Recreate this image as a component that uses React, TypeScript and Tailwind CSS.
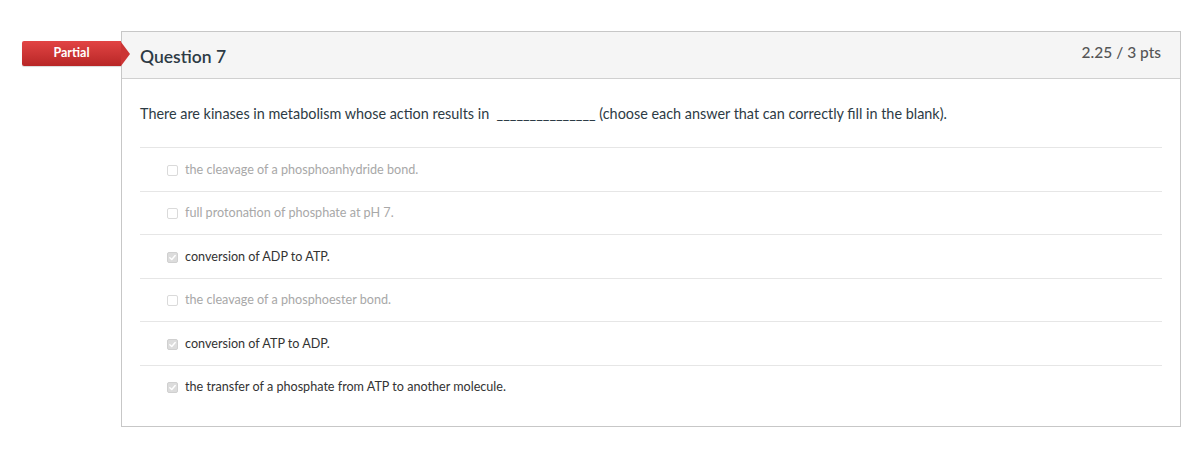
import React from "react";

const answers = [
  { text: "the cleavage of a phosphoanhydride bond.", checked: false },
  { text: "full protonation of phosphate at pH 7.", checked: false },
  { text: "conversion of ADP to ATP.", checked: true },
  { text: "the cleavage of a phosphoester bond.", checked: false },
  { text: "conversion of ATP to ADP.", checked: true },
  { text: "the transfer of a phosphate from ATP to another molecule.", checked: true },
];

function Box({ checked }: { checked: boolean }) {
  return (
    <span
      className={`flex h-[11px] w-[11px] shrink-0 items-center justify-center rounded-[2px] border ${
        checked ? "border-[#d0d0d0] bg-[#dcdcdc]" : "border-[#dadada] bg-white"
      }`}
    >
      {checked && (
        <svg width="9" height="9" viewBox="0 0 10 10">
          <path d="M2 5.2 L4.2 7.3 L8 2.8" fill="none" stroke="#ffffff" strokeWidth="1.6" strokeLinecap="round" strokeLinejoin="round" />
        </svg>
      )}
    </span>
  );
}

export default function App() {
  return (
    <div className="relative bg-white pt-[31px] pb-[27px]" style={{ fontFamily: "Lato, 'Open Sans', sans-serif" }}>
      <div className="ml-[121px] w-[1060px] border border-[#c7c7c7]">
        <div className="flex h-[47px] items-start justify-between border-b border-[#d0d0d0] bg-[#f5f5f5] pl-[18px] pr-[19px]">
          <div className="pt-[12px] text-[17.5px] font-semibold text-[#2d3b45]">Question 7</div>
          <div className="pt-[9px] text-[15.5px] font-medium text-[#555555]">2.25 / 3 pts</div>
        </div>
        <div className="px-[18px] pb-[18px]">
          <div className="pt-[25px] pb-[23px] text-[14.4px] leading-[20px] text-[#2d3b45]">
            There are kinases in metabolism whose action results in&nbsp; _______________ (choose each answer that can correctly fill in the blank).
          </div>
          {answers.map((a, i) => (
            <div key={i} className="flex h-[43.5px] items-center border-t border-[#e6e6e6] pl-[27px] pt-[2px]">
              <Box checked={a.checked} />
              <span className={`ml-[7px] text-[12.6px] ${a.checked ? "text-[#333333]" : "text-[#a8a8a8]"}`}>{a.text}</span>
            </div>
          ))}
        </div>
      </div>
      <div className="absolute left-[22px] top-[41px] flex h-[25px] items-center">
        <div className="flex h-[25px] w-[99px] items-center justify-center rounded-l-[2px] bg-gradient-to-b from-[#e24444] to-[#b82626] text-[12.5px] font-bold text-white shadow-[0_1px_1px_rgba(0,0,0,0.15)]">
          Partial
        </div>
        <div className="h-0 w-0 border-y-[12.5px] border-l-[9px] border-y-transparent border-l-[#cc3434]" />
      </div>
    </div>
  );
}
